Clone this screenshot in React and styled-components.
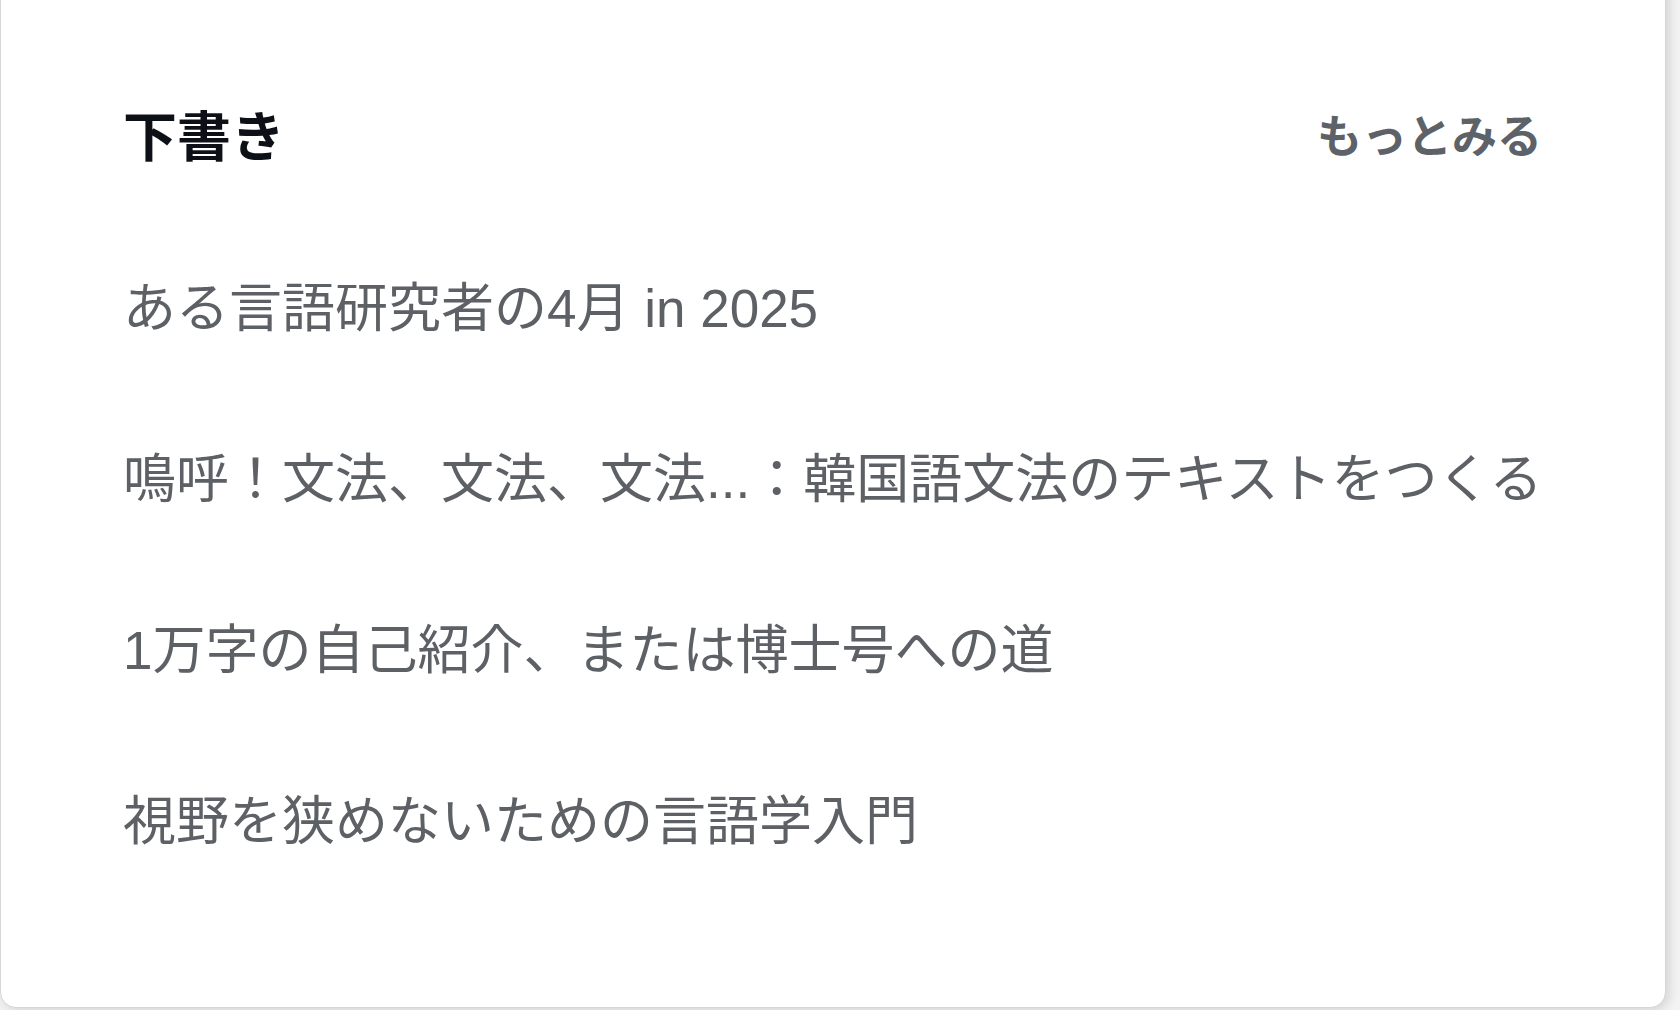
import React from "react";
import styled, { createGlobalStyle } from "styled-components";

const Global = createGlobalStyle`
  html, body {
    margin: 0;
    padding: 0;
    background: #f3f3f3;
    overflow: hidden;
  }
  body {
    font-family: "Liberation Sans", "Noto Sans CJK JP", sans-serif;
  }
`;

const Page = styled.div`
  width: 1680px;
  height: 1010px;
  overflow: hidden;
  display: flex;
  align-items: flex-start;
`;

const Card = styled.section`
  box-sizing: border-box;
  width: 1666px;
  height: 1030px;
  margin-top: -22px;
  margin-left: 0;
  background: #ffffff;
  border: 1.5px solid #d6d6d6;
  border-radius: 16px;
  box-shadow: 3px 2px 12px rgba(0, 0, 0, 0.14);
  padding: 125px 123px 0 122px;
  display: flex;
  flex-direction: column;
`;

const Header = styled.header`
  display: flex;
  justify-content: space-between;
  align-items: center;
  height: 60px;
`;

const Title = styled.h2`
  margin: 0;
  font-family: "Noto Sans CJK JP", sans-serif;
  font-size: 54px;
  line-height: 60px;
  font-weight: 700;
  color: #0d1117;
  letter-spacing: 0;
`;

const MoreLink = styled.a`
  font-family: "Noto Sans CJK JP", sans-serif;
  font-size: 45px;
  line-height: 60px;
  font-weight: 700;
  color: #5d6268;
  text-decoration: none;
  cursor: pointer;
`;

const List = styled.ul`
  list-style: none;
  margin: 59px 0 0;
  padding: 0;
  display: flex;
  flex-direction: column;
`;

const Item = styled.li`
  height: 171px;
  display: flex;
  align-items: center;
  font-family: "Liberation Sans", "Noto Sans CJK JP", sans-serif;
  font-size: 53px;
  line-height: 70px;
  font-weight: 400;
  color: #5d6166;
  white-space: nowrap;
`;

const drafts = [
  "ある言語研究者の4月 in 2025",
  "鳴呼！文法、文法、文法...：韓国語文法のテキストをつくる",
  "1万字の自己紹介、または博士号への道",
  "視野を狭めないための言語学入門",
];

export default function App() {
  return (
    <>
      <Global />
      <Page>
        <Card>
          <Header>
            <Title>下書き</Title>
            <MoreLink>もっとみる</MoreLink>
          </Header>
          <List>
            {drafts.map((d) => (
              <Item key={d}>{d}</Item>
            ))}
          </List>
        </Card>
      </Page>
    </>
  );
}
